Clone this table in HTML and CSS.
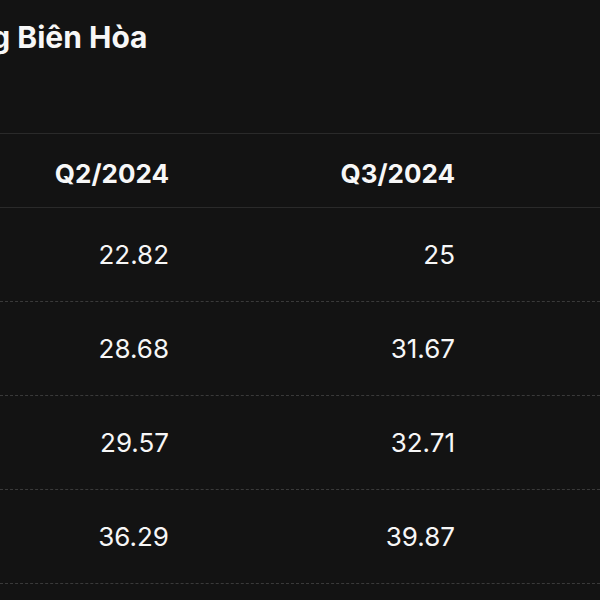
FILE: index.html
```html
<!DOCTYPE html>
<html lang="vi">
<head>
<meta charset="utf-8">
<title>Biên Hòa</title>
<link rel="stylesheet" href="styles.css">
</head>
<body>
<main class="page">
  <h1 class="title">Thị trường Biên Hòa</h1>
  <div class="table">
    <div class="row head">
      <div class="cell">Q2/2024</div>
      <div class="cell">Q3/2024</div>
      <div class="cell"></div>
    </div>
    <div class="row">
      <div class="cell">22.82</div>
      <div class="cell">25</div>
      <div class="cell"></div>
    </div>
    <div class="row">
      <div class="cell">28.68</div>
      <div class="cell">31.67</div>
      <div class="cell"></div>
    </div>
    <div class="row">
      <div class="cell">29.57</div>
      <div class="cell">32.71</div>
      <div class="cell"></div>
    </div>
    <div class="row">
      <div class="cell">36.29</div>
      <div class="cell">39.87</div>
      <div class="cell"></div>
    </div>
  </div>
</main>
</body>
</html>
```
FILE: styles.css
```css
html, body {
  margin: 0;
  padding: 0;
  background: #131313;
  overflow: hidden;
}
body {
  font-family: Inter, "Liberation Sans", sans-serif;
  color: #f7f7f7;
}
.page {
  width: 600px;
  height: 600px;
}
.title {
  margin: 0 0 0 -141px;
  padding-top: 19px;
  font-size: 30px;
  font-weight: 700;
  white-space: nowrap;
  line-height: 36px;
  height: 133px;
  box-sizing: border-box;
}
.table {
  display: flex;
  flex-direction: column;
}
.row {
  display: grid;
  grid-template-columns: 169px 286px 1fr;
  height: 94px;
  box-sizing: border-box;
  align-items: center;
  border-bottom: 1px dashed #3a3a3a;
  font-size: 26px;
}
.row.head {
  height: 75px;
  padding-top: 6px;
  border-top: 1px solid #2a2a2a;
  border-bottom: 1px solid #2a2a2a;
  font-weight: 700;
}
.cell {
  text-align: right;
}
```
